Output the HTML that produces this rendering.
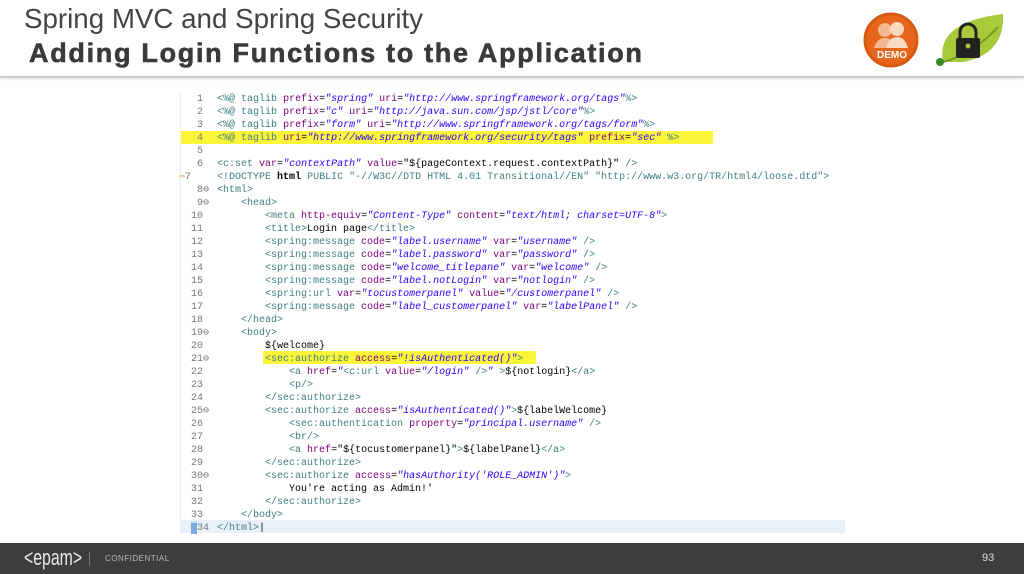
<!DOCTYPE html>
<html><head><meta charset="utf-8"><style>
body{margin:0;width:1024px;height:574px;overflow:hidden;background:#fff;font-family:"Liberation Sans",sans-serif;position:relative}
.t1{position:absolute;left:24px;top:3px;font-size:28px;color:#444;transform:scaleX(0.99);transform-origin:0 0;white-space:nowrap}
.t2{position:absolute;left:29px;top:38px;font-size:27px;font-weight:bold;color:#3a3a3a;white-space:nowrap;letter-spacing:1.7px;-webkit-text-stroke:0.6px #3a3a3a}
.hl{position:absolute;left:0;top:76px;width:1024px;height:2px;background:#ccc;box-shadow:0 1px 2px #ddd}
.code{position:absolute;left:180px;top:92px;width:664px;height:441px;border-left:1px solid #eee}
.ln{position:absolute;left:0;width:664px;height:13px;font-family:"Liberation Mono",monospace;font-size:10px;line-height:13px;white-space:pre}
.n{position:absolute;left:10px;width:24px;color:#777}
.c{position:absolute;left:36px;color:#000}
.g{color:#3f7f7f}.a{color:#7f007f}.v{color:#2a00ff;font-style:italic}.k{color:#3f7f7f}
.foot{position:absolute;left:0;top:543px;width:1024px;height:31px;background:#3d3d3d;color:#ccc}
</style></head><body>
<div class="t1">Spring MVC and Spring Security</div>
<div class="t2">Adding Login Functions to the Application</div>
<div class="hl"></div>
<svg style="position:absolute;left:858px;top:10px" width="160" height="62">
<circle cx="33" cy="30" r="26" fill="#e8661c" stroke="#d85a10" stroke-width="3"/>
<circle cx="27" cy="20" r="7" fill="#f4b890"/><circle cx="39" cy="19" r="7" fill="#fbd8c0"/>
<path d="M16 38 q3-10 11-10 q8 0 11 10z" fill="#f4b890"/><path d="M28 38 q3-11 11-11 q8 0 11 11z" fill="#fbd8c0"/>
<text x="19" y="48" font-size="10" font-weight="bold" fill="#fff" font-family="Liberation Sans">DEMO</text>
<path d="M85 52 q-8-40 60-48 q2 40-40 48z" fill="#a7c93a"/>
<path d="M85 52 q30-8 55-35" stroke="#6f9a1e" stroke-width="2" fill="none"/>
<circle cx="82" cy="52" r="4" fill="#3a8a2a"/>
<path d="M102 28 v-6 a8 8 0 0 1 16 0 v6" stroke="#222" stroke-width="3" fill="none"/>
<rect x="98" y="28" width="24" height="20" rx="2" fill="#222"/>
<circle cx="110" cy="36" r="2.5" fill="#a7c93a"/>
</svg>
<div class="code">
<div style="position:absolute;left:0;top:39px;width:532px;height:13px;background:#fbf53a"></div>
<div style="position:absolute;left:82px;top:259px;width:273px;height:13px;background:#fbf53a"></div>
<div style="position:absolute;left:0;top:428px;width:664px;height:13px;background:#e8f0fa"></div>
<div class="ln" style="top:1px"><span class="n"> 1</span><span class="c"><span class="g">&lt;%@</span> <span class="g">taglib</span> <span class="a">prefix</span>=<span class="v">"spring"</span> <span class="a">uri</span>=<span class="v">"http://www.springframework.org/tags"</span><span class="g">%&gt;</span></span></div>
<div class="ln" style="top:14px"><span class="n"> 2</span><span class="c"><span class="g">&lt;%@</span> <span class="g">taglib</span> <span class="a">prefix</span>=<span class="v">"c"</span> <span class="a">uri</span>=<span class="v">"http://java.sun.com/jsp/jstl/core"</span><span class="g">%&gt;</span></span></div>
<div class="ln" style="top:27px"><span class="n"> 3</span><span class="c"><span class="g">&lt;%@</span> <span class="g">taglib</span> <span class="a">prefix</span>=<span class="v">"form"</span> <span class="a">uri</span>=<span class="v">"http://www.springframework.org/tags/form"</span><span class="g">%&gt;</span></span></div>
<div class="ln" style="top:40px"><span class="n"> 4</span><span class="c"><span class="g">&lt;%@</span> <span class="g">taglib</span> <span class="a">uri</span>=<span class="v">"http://www.springframework.org/security/tags"</span> <span class="a">prefix</span>=<span class="v">"sec"</span> <span class="g">%&gt;</span></span></div>
<div class="ln" style="top:53px"><span class="n"> 5</span></div>
<div class="ln" style="top:66px"><span class="n"> 6</span><span class="c"><span class="g">&lt;c:set</span> <span class="a">var</span>=<span class="v">"contextPath"</span> <span class="a">value</span>=<span class="v" style="font-style:normal;color:#000">"${pageContext.request.contextPath}"</span> <span class="g">/&gt;</span></span></div>
<div class="ln" style="top:79px"><span class="n" style="left:-2px"><span style="color:#e0a000">⇨</span>7</span><span class="c"><span class="g">&lt;!DOCTYPE</span> <b>html</b> <span class="g">PUBLIC</span> <span class="k">"-//W3C//DTD HTML 4.01 Transitional//EN"</span> <span class="k">"http://www.w3.org/TR/html4/loose.dtd"</span><span class="g">&gt;</span></span></div>
<div class="ln" style="top:92px"><span class="n"> 8⊖</span><span class="c"><span class="g">&lt;html&gt;</span></span></div>
<div class="ln" style="top:105px"><span class="n"> 9⊖</span><span class="c">    <span class="g">&lt;head&gt;</span></span></div>
<div class="ln" style="top:118px"><span class="n">10</span><span class="c">        <span class="g">&lt;meta</span> <span class="a">http-equiv</span>=<span class="v">"Content-Type"</span> <span class="a">content</span>=<span class="v">"text/html; charset=UTF-8"</span><span class="g">&gt;</span></span></div>
<div class="ln" style="top:131px"><span class="n">11</span><span class="c">        <span class="g">&lt;title&gt;</span>Login page<span class="g">&lt;/title&gt;</span></span></div>
<div class="ln" style="top:144px"><span class="n">12</span><span class="c">        <span class="g">&lt;spring:message</span> <span class="a">code</span>=<span class="v">"label.username"</span> <span class="a">var</span>=<span class="v">"username"</span> <span class="g">/&gt;</span></span></div>
<div class="ln" style="top:157px"><span class="n">13</span><span class="c">        <span class="g">&lt;spring:message</span> <span class="a">code</span>=<span class="v">"label.password"</span> <span class="a">var</span>=<span class="v">"password"</span> <span class="g">/&gt;</span></span></div>
<div class="ln" style="top:170px"><span class="n">14</span><span class="c">        <span class="g">&lt;spring:message</span> <span class="a">code</span>=<span class="v">"welcome_titlepane"</span> <span class="a">var</span>=<span class="v">"welcome"</span> <span class="g">/&gt;</span></span></div>
<div class="ln" style="top:183px"><span class="n">15</span><span class="c">        <span class="g">&lt;spring:message</span> <span class="a">code</span>=<span class="v">"label.notLogin"</span> <span class="a">var</span>=<span class="v">"notlogin"</span> <span class="g">/&gt;</span></span></div>
<div class="ln" style="top:196px"><span class="n">16</span><span class="c">        <span class="g">&lt;spring:url</span> <span class="a">var</span>=<span class="v">"tocustomerpanel"</span> <span class="a">value</span>=<span class="v">"/customerpanel"</span> <span class="g">/&gt;</span></span></div>
<div class="ln" style="top:209px"><span class="n">17</span><span class="c">        <span class="g">&lt;spring:message</span> <span class="a">code</span>=<span class="v">"label_customerpanel"</span> <span class="a">var</span>=<span class="v">"labelPanel"</span> <span class="g">/&gt;</span></span></div>
<div class="ln" style="top:222px"><span class="n">18</span><span class="c">    <span class="g">&lt;/head&gt;</span></span></div>
<div class="ln" style="top:235px"><span class="n">19⊖</span><span class="c">    <span class="g">&lt;body&gt;</span></span></div>
<div class="ln" style="top:248px"><span class="n">20</span><span class="c">        ${welcome}</span></div>
<div class="ln" style="top:261px"><span class="n">21⊖</span><span class="c">        <span class="g">&lt;sec:authorize</span> <span class="a">access</span>=<span class="v">"!isAuthenticated()"</span><span class="g">&gt;</span></span></div>
<div class="ln" style="top:274px"><span class="n">22</span><span class="c">            <span class="g">&lt;a</span> <span class="a">href</span>=<span class="v">"</span><span class="g">&lt;c:url</span> <span class="a">value</span>=<span class="v">"/login"</span> <span class="g">/&gt;</span><span class="v">"</span> <span class="g">&gt;</span>${notlogin}<span class="g">&lt;/a&gt;</span></span></div>
<div class="ln" style="top:287px"><span class="n">23</span><span class="c">            <span class="g">&lt;p/&gt;</span></span></div>
<div class="ln" style="top:300px"><span class="n">24</span><span class="c">        <span class="g">&lt;/sec:authorize&gt;</span></span></div>
<div class="ln" style="top:313px"><span class="n">25⊖</span><span class="c">        <span class="g">&lt;sec:authorize</span> <span class="a">access</span>=<span class="v">"isAuthenticated()"</span><span class="g">&gt;</span>${labelWelcome}</span></div>
<div class="ln" style="top:326px"><span class="n">26</span><span class="c">            <span class="g">&lt;sec:authentication</span> <span class="a">property</span>=<span class="v">"principal.username"</span> <span class="g">/&gt;</span></span></div>
<div class="ln" style="top:339px"><span class="n">27</span><span class="c">            <span class="g">&lt;br/&gt;</span></span></div>
<div class="ln" style="top:352px"><span class="n">28</span><span class="c">            <span class="g">&lt;a</span> <span class="a">href</span>=<span class="v" style="font-style:normal;color:#000">"${tocustomerpanel}"</span><span class="g">&gt;</span>${labelPanel}<span class="g">&lt;/a&gt;</span></span></div>
<div class="ln" style="top:365px"><span class="n">29</span><span class="c">        <span class="g">&lt;/sec:authorize&gt;</span></span></div>
<div class="ln" style="top:378px"><span class="n">30⊖</span><span class="c">        <span class="g">&lt;sec:authorize</span> <span class="a">access</span>=<span class="v">"hasAuthority('ROLE_ADMIN')"</span><span class="g">&gt;</span></span></div>
<div class="ln" style="top:391px"><span class="n">31</span><span class="c">            You're acting as Admin!'</span></div>
<div class="ln" style="top:404px"><span class="n">32</span><span class="c">        <span class="g">&lt;/sec:authorize&gt;</span></span></div>
<div class="ln" style="top:417px"><span class="n">33</span><span class="c">    <span class="g">&lt;/body&gt;</span></span></div>
<div class="ln" style="top:430px"><span class="n"><span style="background:#7aa8e0;color:#7aa8e0">▒</span>34</span><span class="c"><span class="g">&lt;/html&gt;</span>|</span></div>
</div>
<div class="foot">
<div style="position:absolute;left:24px;top:2px;font-size:22px;color:#e8e8e8;transform:scaleX(0.72);transform-origin:0 0">&lt;epam&gt;</div>
<div style="position:absolute;left:89px;top:9px;width:1px;height:14px;background:#777"></div>
<div style="position:absolute;left:105px;top:11px;font-size:8px;letter-spacing:0.5px;color:#bbb">CONFIDENTIAL</div>
<div style="position:absolute;left:982px;top:9px;font-size:11px;color:#ddd">93</div>
</div>
</body></html>
